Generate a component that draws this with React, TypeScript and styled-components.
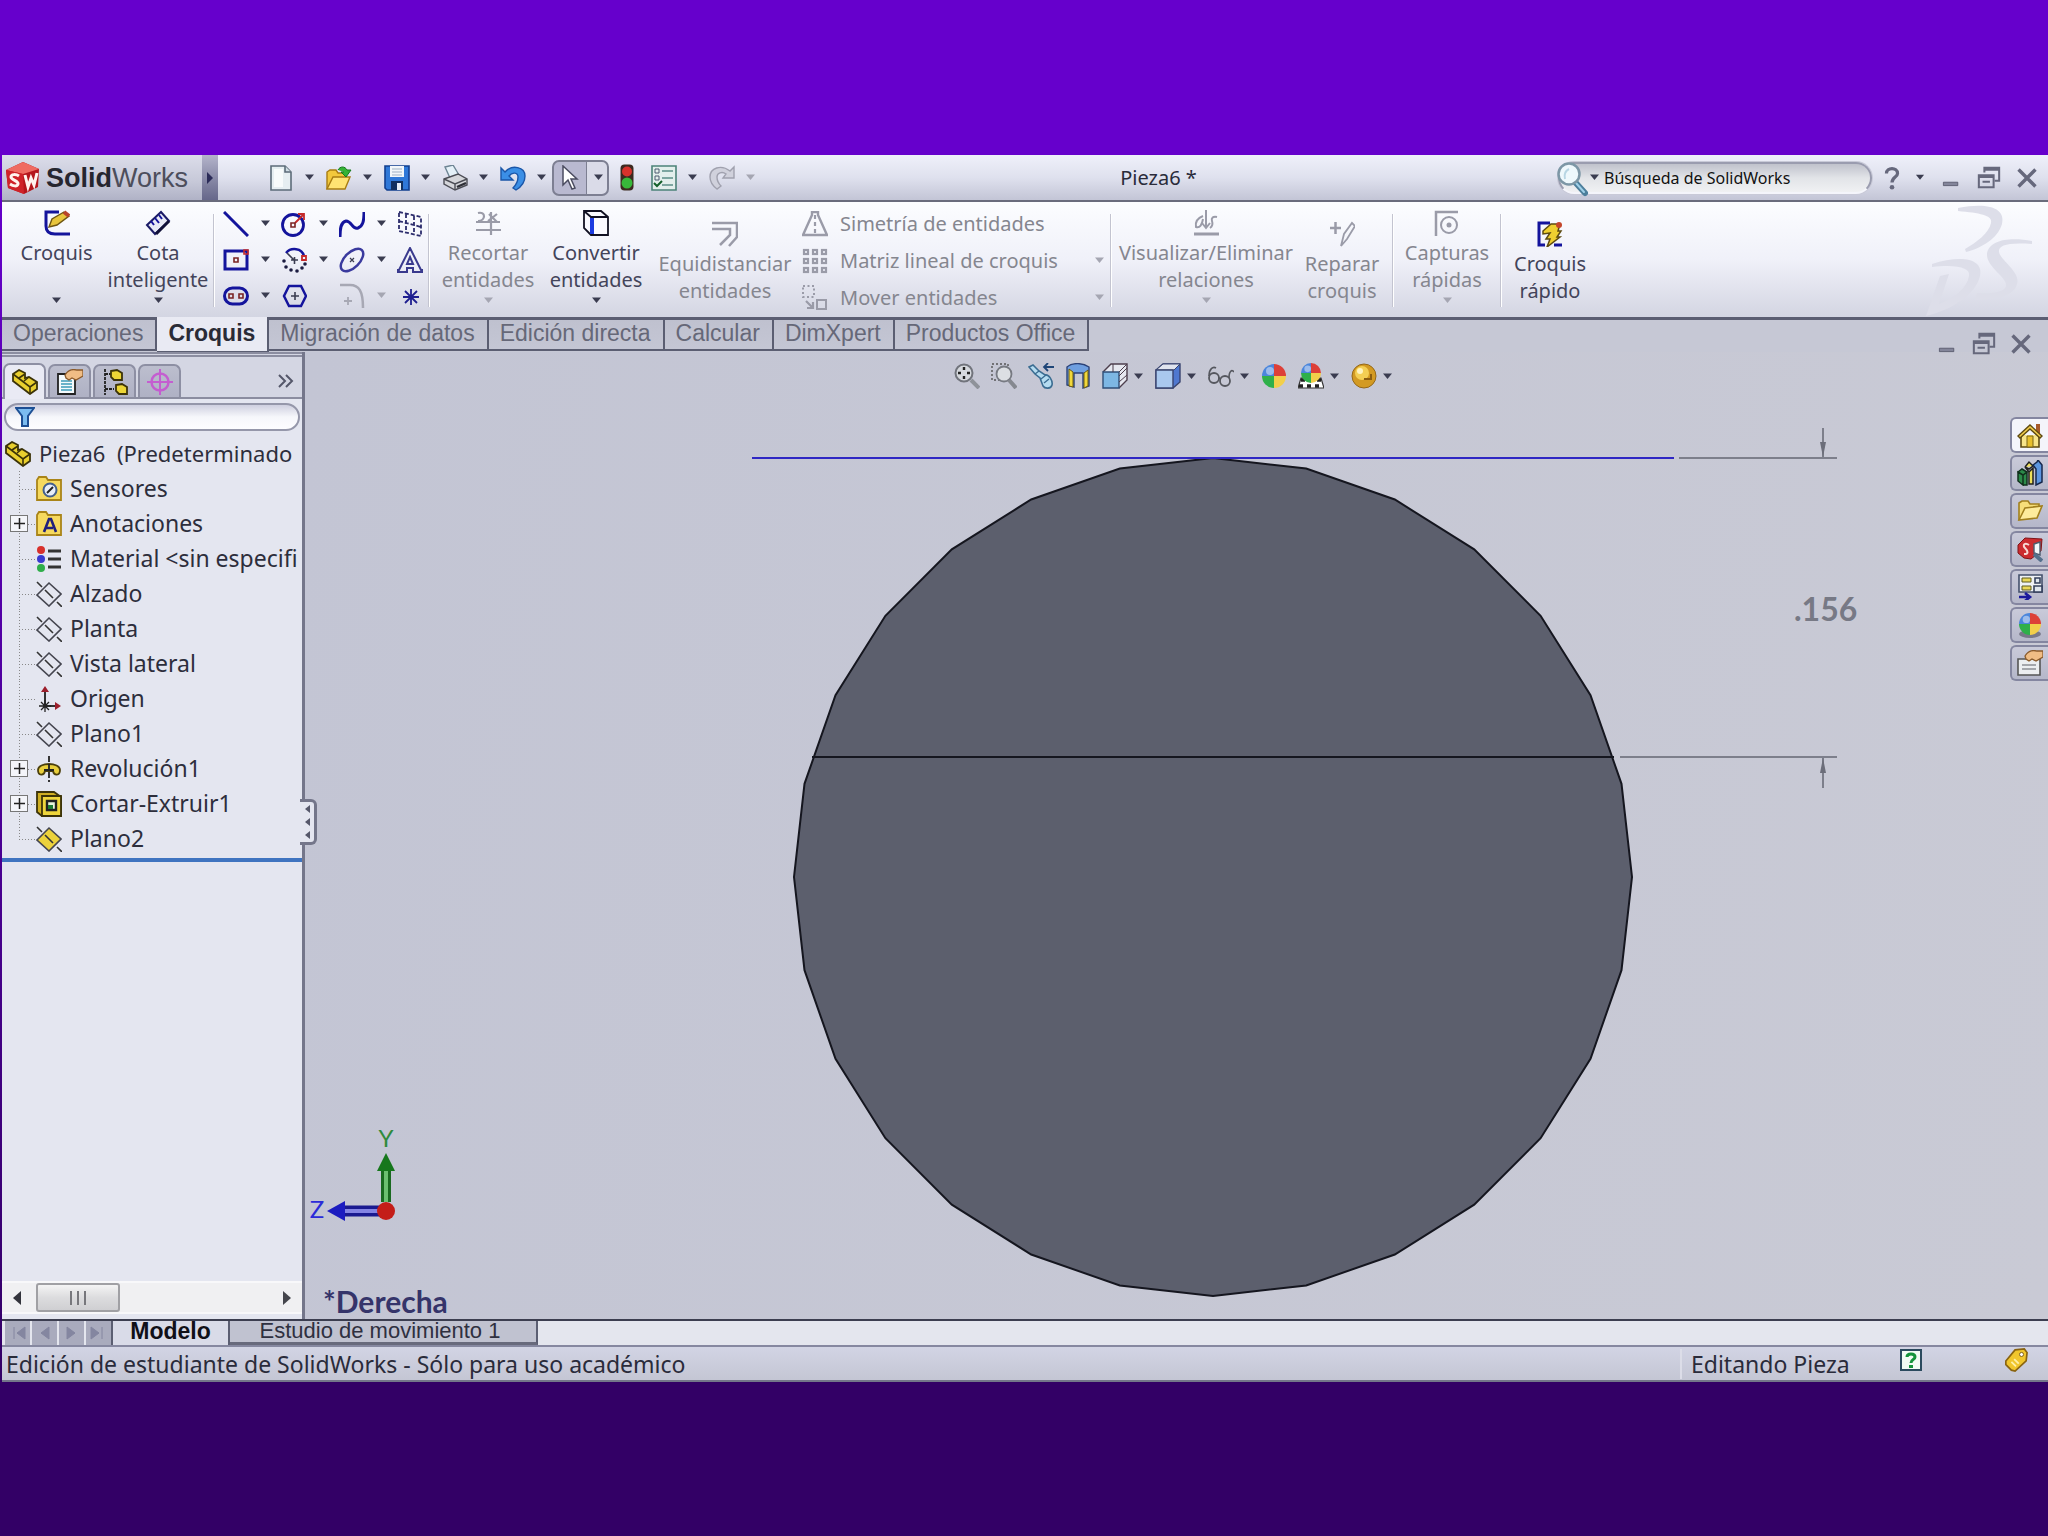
import React from "react";
import styled, { createGlobalStyle, css } from "styled-components";

const ui = `"Noto Sans", "Open Sans", sans-serif`;
const arial = `"Liberation Sans", Arial, sans-serif`;
const edge = "#5b5e72";
const navy = "#14149c";
const ink = "#3a3c50";
const grey = "#9a9ba8";

const GlobalStyle = createGlobalStyle`
  * { box-sizing: border-box; }
  body { margin: 0; font-family: ${ui}; color: #2a2b3a; }
  button, input { font: inherit; color: inherit; }
  button { background: none; border: 0; padding: 0; margin: 0; }
  ul { list-style: none; margin: 0; padding: 0; }
  svg { display: block; flex: none; }
`;

const Desktop = styled.div`
  min-height: 100vh;
  display: flex;
  flex-direction: column;
  padding: 155px 0 154px 2px;
  background: linear-gradient(#6600cc 0%, #6600cc 10%, #330066 90%, #330066 100%);
`;

const Window = styled.main`
  flex: 1;
  display: flex;
  flex-direction: column;
  background: #c6c8d5;
  overflow: hidden;
`;

/* ---------- title bar ---------- */

const TitleBar = styled.header`
  height: 47px;
  display: flex;
  align-items: stretch;
  background: linear-gradient(#eff0fa, #dfe1ee 50%, #c3c5d6);
  border-bottom: 2px solid #6a6c7c;
`;

const Brand = styled.div`
  width: 200px;
  display: flex;
  align-items: center;
  gap: 6px;
  padding-left: 4px;
  background: linear-gradient(#dcddea, #c6c8d8 60%, #b0b2c6);
  font-family: ${arial};
  font-size: 27px;
  line-height: 32px;
  color: #4d4e5c;
`;

const BrandName = styled.span`
  b { color: #26262f; }
`;

const BrandMore = styled.button`
  width: 16px;
  display: grid;
  place-items: center;
  background: linear-gradient(#b4b4cb, #8384a2 60%, #66678a);
`;

const QuickBar = styled.div`
  display: flex;
  align-items: center;
  padding-left: 50px;
`;

const QuickItem = styled.button`
  display: flex;
  align-items: center;
  gap: 10px;
  margin-right: 11px;
`;

const QuickLight = styled(QuickItem)`
  margin-right: 17px;
`;

const SelectTool = styled.button`
  width: 57px;
  height: 36px;
  display: flex;
  align-items: center;
  margin: 0 11px 0 -6px;
  border: 2px solid #7d7f92;
  border-radius: 7px;
  background: linear-gradient(90deg, #b9b9d0 32px, #7d7f92 32px, #7d7f92 33px, #dadbe8 33px);
  padding-left: 2px;
  gap: 11px;
`;

const DocTitle = styled.h1`
  flex: 1;
  align-self: center;
  margin: 0;
  padding-right: 8px;
  text-align: center;
  font-size: 20px;
  font-weight: 400;
  line-height: 28px;
`;

const Search = styled.label`
  align-self: center;
  position: relative;
  width: 314px;
  height: 32px;
  display: flex;
  align-items: center;
  gap: 4px;
  padding-left: 29px;
  border: 2px solid #9a9caf;
  border-bottom-color: #f4f5fb;
  border-radius: 16px;
  background: linear-gradient(#c0c2cc, #e2e4e8 50%, #f0f1f3);
  box-shadow: 0 0 0 1px #c9cad8;
`;

const SearchLens = styled.span`
  position: absolute;
  left: -4px;
  top: -2px;
`;

const SearchInput = styled.input`
  flex: 1;
  min-width: 0;
  border: 0;
  padding: 0;
  background: none;
  outline: none;
  font-size: 16px;
  line-height: 24px;
  color: #111;
`;

const Controls = styled.div<{ $gap: number }>`
  display: flex;
  align-items: center;
  gap: ${(p) => p.$gap}px;
`;

const AppControls = styled(Controls)`
  padding: 0 10px 0 12px;
`;

/* ---------- ribbon ---------- */

const Ribbon = styled.section`
  height: 118px;
  display: flex;
  align-items: stretch;
  padding-left: 4px;
  background: linear-gradient(#fcfdff, #f0f1f9 50%, #d3d5e2);
  border-bottom: 3px solid ${edge};
`;

const Separator = styled.div`
  width: 2px;
  margin: 12px 4px 10px;
  background: linear-gradient(90deg, #c3c4d0 50%, #ffffff 50%);
`;

const BigButton = styled.button<{ $w: number; $low?: boolean; $off?: boolean }>`
  width: ${(p) => p.$w}px;
  display: flex;
  flex-direction: column;
  align-items: center;
  padding-top: ${(p) => (p.$low ? 19 : 8)}px;
  font-size: 20px;
  line-height: 27px;
  color: ${(p) => (p.$off ? "#85868f" : "#43445a")};
  white-space: pre-line;
`;

const BigLabel = styled.span`
  height: 58px;
  margin: 3px -8px 0;
`;

const ToolGrid = styled.div`
  display: grid;
  grid-template-columns: repeat(3, 58px) 27px;
  grid-auto-rows: 36px;
  align-content: center;
  padding-left: 4px;
`;

const SmallTool = styled.button`
  display: flex;
  align-items: center;
  gap: 11px;
`;

const RowList = styled.div`
  width: 306px;
  padding: 3px 1px 0 2px;
  display: grid;
  grid-auto-rows: 37px;
`;

const RowButton = styled.button`
  display: flex;
  align-items: center;
  gap: 12px;
  font-size: 20px;
  line-height: 28px;
  color: #85868f;
  span { flex: 1; text-align: left; }
`;

const Watermark = styled.div`
  margin-left: auto;
  padding-right: 12px;
`;

/* ---------- command tabs ---------- */

const TabStrip = styled.nav`
  display: flex;
  align-items: flex-start;
  height: 32px;
`;

const CommandTab = styled.button<{ $active?: boolean }>`
  height: 31px;
  padding: 0 12px 0 11px;
  border: solid ${edge};
  border-width: 0 2px 2px 0;
  background: linear-gradient(#bfc1cf, #c4c6d4);
  font-family: ${arial};
  font-size: 23px;
  line-height: 24px;
  padding-bottom: 4px;
  color: #666878;
  ${(p) =>
    p.$active &&
    css`
      position: relative;
      height: 36px;
      margin-top: -3px;
      padding-bottom: 3px;
      background: #e9eaf3;
      font-weight: 700;
      color: #2a2b36;
    `}
`;

/* ---------- body ---------- */

const Body = styled.div`
  flex: 1;
  display: flex;
  min-height: 0;
`;

const Panel = styled.aside`
  width: 303px;
  display: flex;
  flex-direction: column;
  background: #e4e6f0;
  border-right: 3px solid #74768a;
  position: relative;
`;

const PanelTabs = styled.div`
  display: flex;
  align-items: flex-end;
  gap: 2px;
  height: 47px;
  padding-left: 1px;
  background: #d4d6e3;
  border-top: 5px double #8b8da0;
  border-bottom: 2px solid #8b8da0;
`;

const PanelTab = styled.button<{ $active?: boolean }>`
  width: 43px;
  height: ${(p) => (p.$active ? 36 : 33)}px;
  margin-bottom: ${(p) => (p.$active ? -2 : 0)}px;
  display: grid;
  place-items: center;
  border: 2px solid #8d8fa3;
  border-bottom: 0;
  border-radius: 7px 7px 0 0;
  background: ${(p) => (p.$active ? "#e9eaf4" : "linear-gradient(#bcbece, #afb1c4)")};
`;

const PanelMore = styled.button`
  margin: 0 8px 8px auto;
`;

const Filter = styled.label`
  display: flex;
  align-items: center;
  height: 28px;
  margin: 4px 2px 5px 2px;
  padding-left: 9px;
  border: 2px solid #9597aa;
  border-radius: 14px;
  background: linear-gradient(#cfd0e0, #f6f7fb 50%, #fdfdff);
`;

const FilterInput = styled.input`
  flex: 1;
  min-width: 0;
  border: 0;
  outline: none;
  background: none;
  font-size: 16px;
`;

const Tree = styled.ul`
  overflow: hidden;
  padding-bottom: 2px;
  border-bottom: 4px solid #3f74c0;
  font-size: 23px;
  line-height: 35px;
  color: #2d2e3c;
`;

const TreeRoot = styled.li`
  display: flex;
  align-items: center;
  gap: 8px;
  height: 35px;
  padding-left: 3px;
  font-size: 22px;
  white-space: pre;
`;

const TreeItem = styled.li<{ $last?: boolean }>`
  display: flex;
  align-items: center;
  gap: 8px;
  height: 35px;
  white-space: nowrap;
  padding-left: 8px;
  background:
    repeating-linear-gradient(#888 0 1px, transparent 1px 3px) 17px 0 / 1px ${(p) => (p.$last ? 18 : 35)}px no-repeat,
    repeating-linear-gradient(90deg, #888 0 1px, transparent 1px 3px) 17px 18px / 17px 1px no-repeat;
`;

const Gutter = styled.span`
  flex: none;
  width: 18px;
  display: flex;
  align-items: center;
`;

const Expander = styled.button`
  width: 18px;
  height: 17px;
  display: grid;
  place-items: center;
  border: 1px solid #777;
  background: #f4f5fa;
`;

const Splitter = styled.button`
  position: absolute;
  z-index: 2;
  left: 298px;
  top: 447px;
  width: 17px;
  height: 46px;
  display: grid;
  place-items: center;
  border: 3px solid #74768a;
  border-left: 0;
  border-radius: 0 6px 6px 0;
  background: #e4e6f0;
`;

const HScroll = styled.div`
  margin: auto 0 5px;
  height: 33px;
  display: flex;
  align-items: center;
  padding: 0 10px;
  gap: 15px;
  background: #f0f0f2;
  border-top: 2px solid #f8f8fa;
  border-bottom: 2px solid #f8f8fa;
`;

const Thumb = styled.button`
  width: 84px;
  height: 29px;
  margin-right: auto;
  display: flex;
  align-items: center;
  justify-content: center;
  gap: 5px;
  border: 2px solid #a0a0a4;
  border-radius: 3px;
  background: linear-gradient(#f4f4f4, #dcdcde 50%, #cfcfd2);
  i { width: 2px; height: 14px; background: #77777c; }
`;

const Canvas = styled.section`
  flex: 1;
  min-width: 0;
  position: relative;
  display: flex;
  background: linear-gradient(100deg, #c3c5d4, #c9cad5);
`;

const Drawing = styled.svg`
  flex: 1;
  width: 100%;
  height: 100%;
  min-width: 0;
`;

const ViewBar = styled.div`
  position: absolute;
  left: 0;
  right: 6px;
  top: 11px;
  display: flex;
  justify-content: center;
  gap: 11px;
`;

const ViewTool = styled.button`
  display: flex;
  align-items: center;
  gap: 5px;
`;

const DocControls = styled(Controls)`
  position: absolute;
  right: 16px;
  top: -20px;
`;

const TaskPane = styled.nav`
  position: absolute;
  right: 0;
  top: 65px;
  display: grid;
  gap: 2px;
`;

const TaskTab = styled.button<{ $active?: boolean }>`
  width: 38px;
  height: 36px;
  display: grid;
  place-items: center;
  border: 2px solid #8486a0;
  border-right: 0;
  border-radius: 6px 0 0 6px;
  background: ${(p) => (p.$active ? "#f4f5fb" : "linear-gradient(#c9cad9, #b5b7c9)")};
`;

/* ---------- bottom ---------- */

const ModelTabs = styled.nav`
  height: 26px;
  display: flex;
  align-items: stretch;
  border-top: 2px solid #3c3e50;
  background: #e4e6ee;
  font-family: ${arial};
  line-height: 20px;
`;

const NavGroup = styled.div`
  display: flex;
  gap: 2px;
  width: 111px;
  padding-left: 3px;
  border-right: 2px solid ${edge};
`;

const NavButton = styled.button`
  width: 25px;
  display: grid;
  place-items: center;
  background: #a9abbd;
`;

const ModelTab = styled.button<{ $active?: boolean; $w: number }>`
  width: ${(p) => p.$w}px;
  padding-right: ${(p) => (p.$active ? 0 : 6)}px;
  padding-bottom: ${(p) => (p.$active ? 4 : 1)}px;
  border-right: 2px solid ${edge};
  border-bottom: ${(p) => (p.$active ? 0 : 3)}px solid #686a7c;
  background: ${(p) => (p.$active ? "#d9dbe8" : "#c0c2d0")};
  font-size: ${(p) => (p.$active ? 23 : 22)}px;
  font-weight: ${(p) => (p.$active ? 700 : 400)};
  color: ${(p) => (p.$active ? "#101018" : "#2f3040")};
`;

const StatusBar = styled.footer`
  height: 37px;
  display: flex;
  align-items: center;
  padding: 0 20px 0 4px;
  border-top: 2px solid #8688a0;
  border-bottom: 2px solid #74768a;
  background: linear-gradient(#d2d4e4, #c4c6d4);
  font-size: 23px;
  line-height: 30px;
`;

const StatusMode = styled.span`
  margin-left: auto;
  width: 212px;
  padding-left: 9px;
  border-left: 2px solid #dcdde8;
`;

const StatusHelp = styled.button`
  margin: 0 82px 8px 8px;
`;

const StatusTag = styled.button`
  margin-bottom: 8px;
`;

/* ---------- drawings ---------- */

const Icon = ({ children, size = 26 }: { children: React.ReactNode; size?: number }) => (
  <svg width={size} height={size} viewBox="0 0 26 26" fill="none" aria-hidden="true">
    {children}
  </svg>
);

const Caret = ({ off = false, w = 11 }: { off?: boolean; w?: number }) => (
  <svg width={w} height="7" viewBox="0 0 11 7" aria-hidden="true">
    <path d="M1 0.5h9L5.500 6z" fill={off ? "#a5a6b2" : ink} />
  </svg>
);

const Logo = () => (
  <svg width="34" height="32" viewBox="0 0 34 32" aria-hidden="true">
    <path d="M17 0 33 7 32 25 18 32 2 26 0 8z" fill="#b5161c" />
    <path d="M17 0 33 7 17 12 0 8z" fill="#ef6b62" />
    <path d="M0 8 17 12 18 32 2 26z" fill="#cf2228" />
    <path d="M13 14c-3-2-8-2-8 1s8 4 7 7-5 2-8 0" fill="none" stroke="#fff3ee" strokeWidth="3" />
    <path d="M19 13l3 12 3-9 3 7 3-12" fill="none" stroke="#fff3ee" strokeWidth="3" />
  </svg>
);

const NewIcon = () => (
  <Icon>
    <path d="M3 1h14l6 6v18H3z" fill="#e6eef1" stroke="#5c6b78" strokeWidth="1.6" />
    <path d="M6 4h9v18H6z" fill="#f8fbfb" />
    <path d="M17 1v6h6" fill="#cfdde4" stroke="#5c6b78" strokeWidth="1.6" />
  </Icon>
);
const OpenIcon = () => (
  <Icon>
    <path d="M1 24V7l3-2h6l2 3h8v5" fill="#f2c83c" stroke="#a87c12" strokeWidth="1.4" />
    <path d="M1 24 7 12h17l-5 12z" fill="#ffe372" stroke="#a87c12" strokeWidth="1.4" />
    <path d="M12 5c2-4 7-4 9 0h4l-5 7-5-5h3" fill="#35b336" stroke="#167a1b" />
  </Icon>
);
const SaveIcon = () => (
  <Icon>
    <path d="M1 1h24v24H3l-2-2z" fill="#2f78d8" stroke="#123f8f" strokeWidth="1.6" />
    <path d="M6 1h14v11H6z" fill="#f2f6fa" />
    <path d="M8 4h10M8 7h10M8 10h10" stroke="#9fb0c4" />
    <path d="M7 16h12v9H7z" fill="#12305f" />
    <path d="M13 18h4v7h-4z" fill="#e8eef6" />
  </Icon>
);
const PrintIcon = () => (
  <Icon>
    <path d="M3 2 11 0l6 10-9 3z" fill="#e5f1f8" stroke="#6d8493" strokeWidth="1.4" />
    <path d="M2 14 16 9l9 5v6l-12 5-11-6z" fill="#d5d6da" stroke="#4c4d55" strokeWidth="1.4" />
    <path d="M2 14l11 5 12-5M13 19v6" stroke="#4c4d55" strokeWidth="1.4" />
    <path d="M15 22l9-4" stroke="#2e2f36" strokeWidth="2.400" />
  </Icon>
);
const UndoIcon = () => (
  <Icon>
    <path d="M1 3v12h12l-4-4c3-4 9-4 9 1 0 4-2 8-5 11l3 2c5-3 9-8 9-14C25 2 12-1 5 7z" fill="#3b8fe6" stroke="#1a56a8" strokeWidth="1.4" />
  </Icon>
);
const CursorIcon = () => (
  <Icon>
    <path d="M7 1v19l5-5 4 9 3-1-4-9h6z" fill="#fff" stroke="#4b4c60" strokeWidth="1.5" />
  </Icon>
);
const LightIcon = () => (
  <svg width="14" height="27" viewBox="0 0 14 27" aria-hidden="true">
    <rect x="0.500" y="0.500" width="13" height="26" rx="4" fill="#3c2a20" />
    <circle cx="7" cy="7.500" r="5" fill="#d8322c" />
    <circle cx="7" cy="19" r="5.500" fill="#38b83a" />
  </svg>
);
const OptionsIcon = () => (
  <Icon>
    <path d="M1 1h24v24H1z" fill="#e3efec" stroke="#4c8278" strokeWidth="1.6" />
    <path d="M4 4h4v4H4zM4 11h4v4H4z" stroke="#4c5a70" />
    <path d="M11 6h11M11 13h11M11 20h11" stroke="#5c8f86" strokeWidth="1.6" />
    <path d="M3 18l3 3 5-5" stroke="#14602a" strokeWidth="2" />
  </Icon>
);
const RedoIcon = () => (
  <Icon>
    <path d="M25 2v11H14l3-4c-4-3-9-1-9 3s2 7 4 9l-4 3C4 21 1 17 1 12 1 3 12-1 21 6z" fill="#d0d1dc" stroke="#a0a1ae" strokeWidth="1.4" />
  </Icon>
);
const LensIcon = () => (
  <svg width="34" height="36" viewBox="0 0 34 36" aria-hidden="true">
    <path d="M19 20l10 11" stroke="#4d7f9c" strokeWidth="6" strokeLinecap="round" />
    <path d="M20 21l8 9" stroke="#9fd0e8" strokeWidth="2" strokeLinecap="round" />
    <circle cx="13" cy="12" r="10.500" fill="#eef8fc" stroke="#7d97a6" strokeWidth="2.500" />
    <path d="M9 17c-1-4 0-8 4-10" stroke="#b8d6e4" strokeWidth="2" fill="none" />
  </svg>
);

const CroquisIcon = () => (
  <Icon>
    <path d="M15 2H2v14c0 6 4 8 9 8h15" stroke={navy} strokeWidth="3" />
    <path d="M5 17 8 9 20 2l5 4-12 9z" fill="#e8c53c" stroke="#6e5612" strokeWidth="1.400" />
    <path d="M20 2l5 4" stroke="#b8442a" strokeWidth="4" />
  </Icon>
);
const CotaIcon = () => (
  <Icon>
    <path d="M2 15 16 2l8 9-14 13z" fill="#e8eaf6" stroke="#1b1b66" strokeWidth="2" />
    <path d="M11 24 24 11" stroke="#111138" strokeWidth="3" />
    <path d="M6 11l3 4M10 8l4 5M14 5l3 4" stroke={navy} strokeWidth="2" />
  </Icon>
);
const LineIcon = () => <Icon><path d="M1 1l24 24" stroke={navy} strokeWidth="3" /></Icon>;
const CircleIcon = () => (
  <Icon>
    <circle cx="12" cy="14" r="10.500" stroke={navy} strokeWidth="2.800" />
    <path d="M14 12l9-9M17 3h6v6" stroke="#c52a2a" strokeWidth="1.800" />
    <path d="M10 12h4v4h-4z" stroke="#7a2323" strokeWidth="1.600" />
  </Icon>
);
const SplineIcon = () => <Icon><path d="M1 26c0-9 1-15 6-16 6 0 6 9 12 7 5-2 6-7 6-16" stroke={navy} strokeWidth="3" /></Icon>;
const DashPlaneIcon = () => (
  <Icon><path d="M2 1l22 5v19L2 20zM2 10l22 6M9 3v19M17 5v18" stroke="#2c2c6c" strokeWidth="1.800" strokeDasharray="4 2" /></Icon>
);
const RectIcon = () => (
  <Icon>
    <path d="M2 4h22v18H2z" stroke={navy} strokeWidth="3" />
    <path d="M11 11h4v4h-4z" stroke="#7a2323" strokeWidth="1.600" />
    <path d="M21 3h4v4h-4z" stroke="#c52a2a" strokeWidth="1.600" />
  </Icon>
);
const ArcIcon = () => (
  <Icon>
    <path d="M5 6c5-6 16-5 18 3" stroke={navy} strokeWidth="2.500" />
    <path d="M21 9h4v4h-4z" stroke="#c52a2a" strokeWidth="1.800" />
    <path d="M6 6l7 7M10 13h7M13.500 10v7" stroke={ink} strokeWidth="1.600" />
    <g fill="#1c1c40">
      <circle cx="3" cy="14" r="1.800" /><circle cx="5" cy="20" r="1.800" /><circle cx="10" cy="23" r="1.800" />
      <circle cx="16" cy="24" r="1.800" /><circle cx="21" cy="21" r="1.800" /><circle cx="24" cy="17" r="1.800" />
    </g>
  </Icon>
);
const EllipseIcon = () => (
  <Icon>
    <ellipse cx="13" cy="13" rx="14" ry="7.500" transform="rotate(-45 13 13)" stroke="#3a3a9e" strokeWidth="2.500" />
    <path d="M11 11l4 4M15 11l-4 4" stroke={ink} strokeWidth="1.200" />
  </Icon>
);
const TextIcon = () => (
  <Icon><path d="M13 1 2 23H1v2h9v-4h6v4h9v-2h-1zM13 10l3 7h-6z" stroke="#3a3a8e" strokeWidth="2" /></Icon>
);
const SlotIcon = () => (
  <Icon>
    <rect x="1.500" y="5" width="23" height="16" rx="8" stroke={navy} strokeWidth="3" />
    <path d="M6 11h4v4H6zM16 11h4v4h-4z" stroke="#7a2323" strokeWidth="1.600" />
  </Icon>
);
const HexIcon = () => (
  <Icon>
    <path d="M8 3h12l5 10-5 10H8L3 13z" stroke={navy} strokeWidth="2.500" />
    <path d="M10 13h8M14 9v8" stroke={ink} strokeWidth="1.600" />
  </Icon>
);
const FilletIcon = () => (
  <Icon><path d="M1 2h10c9 0 13 6 13 23" stroke="#a7a8b4" strokeWidth="2.500" /><path d="M5 18h8M9 14v8" stroke="#a7a8b4" strokeWidth="1.800" /></Icon>
);
const StarIcon = () => <Icon><path d="M14 6v16M6 14h16M8 8l12 12M20 8 8 20" stroke="#1f1f90" strokeWidth="1.800" /></Icon>;
const TrimIcon = () => (
  <Icon><path d="M1 20h25M16 2v23M1 12h24M3 3c8-2 8 8 0 8M22 4l-9 7M14 4l8 8" stroke={grey} strokeWidth="2.200" /></Icon>
);
const ConvertIcon = () => (
  <Icon>
    <path d="M1 1h17l7 6v18H8L1 18zM1 1l7 6h17M8 7v18" fill="#fafaff" stroke="#111122" strokeWidth="1.800" />
    <path d="M9 8v16" stroke="#1c3be0" strokeWidth="4" />
  </Icon>
);
const OffsetIcon = () => <Icon><path d="M0 2h25v14l-8 9M0 8h18v6l-10 10" stroke={grey} strokeWidth="2.500" /></Icon>;
const MirrorIcon = () => <Icon><path d="M1 24 10 4v-3h6v3l9 20z" stroke={grey} strokeWidth="2.400" /><path d="M13 4v20" stroke={grey} strokeWidth="2.200" strokeDasharray="4 3" /></Icon>;
const PatternIcon = () => (
  <Icon>
    {[2, 11, 20].map((y) => [2, 11, 20].map((x) => <rect key={`${x}-${y}`} x={x} y={y} width="4" height="4" stroke={grey} strokeWidth="2.200" />))}
  </Icon>
);
const MoveIcon = () => (
  <Icon>
    <path d="M1 1h11v11H1z" stroke={grey} strokeWidth="2" strokeDasharray="2 2.500" />
    <path d="M15 15h9v9h-9z" stroke={grey} strokeWidth="2" />
    <path d="M4 16l7 7M11 17v6H5" stroke={grey} strokeWidth="2.200" />
  </Icon>
);
const RelationsIcon = () => (
  <Icon><path d="M1 24h25" stroke={grey} strokeWidth="3" /><path d="M13 0v18M9 13l4 5 4-5M10 6C5 8 2 12 3 17c4 1 6-2 7-8M24 7c-4-1-6 1-5 4s1 5-2 7" stroke={grey} strokeWidth="2" /></Icon>
);
const RepairIcon = () => <Icon><path d="M1 7h11M6.500 1v12" stroke={grey} strokeWidth="2.500" /><path d="M12 25l3-12 8-11 3 3-8 13z" stroke={grey} strokeWidth="1.800" /></Icon>;
const SnapsIcon = () => (
  <Icon><path d="M2 26V2h22" stroke={grey} strokeWidth="2.500" /><circle cx="15" cy="15" r="8" stroke={grey} strokeWidth="2" /><circle cx="15" cy="15" r="2.500" fill={grey} /></Icon>
);
const RapidIcon = () => (
  <Icon>
    <path d="M13 2H2v22h6M17 24h8" stroke={navy} strokeWidth="3" />
    <path d="M6 10l8-7h9l-2 7h3l-4 6h3L10 26l3-8h-4l4-6-7 1z" fill="#efd030" stroke="#5c4a10" strokeWidth="1.500" />
    <circle cx="22" cy="4" r="3" fill="#c4462a" />
  </Icon>
);

const MinIcon = () => <Icon size={22}><path d="M4 18h17v4H4z" fill="#83859a" stroke="#55576a" /></Icon>;
const RestoreIcon = () => (
  <Icon size={24}><path d="M8 7V2h16v14h-5M8 4h16" stroke="#66687c" strokeWidth="2.200" /><path d="M2 10h16v13H2zM2 12h16M6 17h8" stroke="#66687c" strokeWidth="2.200" /></Icon>
);
const CloseIcon = () => <Icon size={22}><path d="M3 3l20 20M23 3 3 23" stroke="#66687c" strokeWidth="4" /></Icon>;
const HelpIcon = () => (
  <svg width="16" height="24" viewBox="0 0 16 26" aria-hidden="true">
    <path d="M2 8c0-7 12-7 12 0 0 4-6 4-6 10" fill="none" stroke="#66687c" strokeWidth="3.500" />
    <circle cx="8" cy="23" r="2.500" fill="#66687c" />
  </svg>
);

const PartIcon = () => (
  <Icon>
    <path d="M1 5 7 1l6 3v5l4-1 8 5v7l-7 5L1 12z" fill="#e9cf2e" stroke="#3c3308" strokeWidth="1.800" />
    <path d="M1 5l17 13 7-5M18 18v7M7 9l6-4M12 12l5-4" stroke="#3c3308" strokeWidth="1.600" />
  </Icon>
);
const Hand = () => <path d="M8 6c3-5 8-6 12-5h6v6l-7 4-4-2-3 2-3-2z" fill="#f0bd85" stroke="#8a5a2a" strokeWidth="1.300" />;
const PropertyIcon = () => (
  <Icon><path d="M1 5h17v20H1z" fill="#f4fafc" stroke="#222" strokeWidth="1.800" /><path d="M4 12h11M4 15h11M4 18h11M4 21h11" stroke="#3e9cb8" strokeWidth="1.400" /><Hand /></Icon>
);
const ConfigIcon = () => (
  <Icon>
    <path d="M3 0v26M3 5h7M3 20h9" stroke="#222" strokeWidth="1.800" strokeDasharray="3 1" />
    <path d="M9 2l6-1 5 3v7h-8l-3-3zM14 16l6-1 5 3v7h-8l-3-3z" fill="#ecd536" stroke="#3c3308" strokeWidth="1.800" />
  </Icon>
);
const TargetIcon = () => (
  <Icon><circle cx="13" cy="13" r="8.500" stroke="#c45ed0" strokeWidth="2.500" /><path d="M13 0v26M0 13h26" stroke="#c45ed0" strokeWidth="2" /></Icon>
);
const FunnelIcon = () => (
  <svg width="20" height="20" viewBox="0 0 20 20" aria-hidden="true"><path d="M1 1h18l-6 8v10H7V9z" fill="#7bbcf0" stroke="#1d4f94" strokeWidth="2" /></svg>
);
const Folder = () => <path d="M1 24V4l2-3h7l2 3h13v20z" fill="#f6d95e" stroke="#a98418" strokeWidth="1.800" />;
const SensorIcon = () => <Icon><Folder /><circle cx="14" cy="14" r="6.500" fill="#e8eefa" stroke="#45608c" strokeWidth="2" /><path d="M11 17l6-6" stroke="#222" strokeWidth="2" /></Icon>;
const NoteIcon = () => <Icon><Folder /><path d="M8 21l5-13h2l5 13M10 17h7" stroke="#20207c" strokeWidth="2.600" /></Icon>;
const MaterialIcon = () => (
  <Icon>
    <circle cx="5" cy="4" r="4" fill="#d8312c" /><circle cx="5" cy="13" r="4" fill="#3a3ad0" /><circle cx="5" cy="22" r="4" fill="#2fae4a" />
    <path d="M12 5h13M12 13h13M12 21h13" stroke="#333" strokeWidth="2.800" />
  </Icon>
);
const PlaneIcon = ({ fill = "none" }: { fill?: string }) => (
  <Icon>
    <path d="M1 14 13 2l12 11-12 12z" fill={fill} stroke="#44454f" strokeWidth="1.600" />
    <path d="M1 1l5 5M9 9l8 8M21 21l5 5" stroke="#333" strokeWidth="1.600" />
  </Icon>
);
const OriginIcon = () => (
  <Icon><path d="M9 5v15h12" stroke="#333" strokeWidth="2" /><path d="M5 16l8 8M13 16l-8 8M9 14v12M3 20h12" stroke="#222" strokeWidth="1.300" /><path d="M9 0l4 6H5zM25 20l-6-4v8z" fill="#9c1f2c" /></Icon>
);
const RevolveIcon = () => (
  <Icon><path d="M2 14c0-8 22-8 22 0 0 6-6 6-7 1h-8c-1 5-7 5-7-1z" fill="#e9cf3c" stroke="#4c400c" strokeWidth="1.800" /><path d="M13 0v26" stroke="#222" strokeWidth="1.800" strokeDasharray="6 2" /><path d="M8 14h10" stroke="#222" strokeWidth="2" /></Icon>
);
const CutIcon = () => (
  <Icon>
    <path d="M1 1h17l7 5v19H6l-5-4z" fill="#cfae22" stroke="#3c3308" strokeWidth="1.800" />
    <path d="M6 5h19v20H6z" fill="#efd63c" stroke="#3c3308" strokeWidth="1.800" />
    <path d="M11 10h9v9h-9z" fill="#e8f4dc" stroke="#222" strokeWidth="2.400" /><path d="M12 18v-4h5v4z" fill="#1d7a34" />
  </Icon>
);

const ZoomFitIcon = () => (
  <Icon><circle cx="10" cy="10" r="8.500" fill="#d6d9de" stroke="#71747c" strokeWidth="2" /><path d="M10 4v3M10 13v3M4 10h3M13 10h3" stroke="#222" strokeWidth="2.400" /><path d="M17 17l8 8" stroke="#8e9299" strokeWidth="4" /></Icon>
);
const ZoomAreaIcon = () => (
  <Icon><path d="M1 1h16v16H1z" stroke="#555" strokeWidth="1.400" strokeDasharray="2 2" /><circle cx="13" cy="11" r="7.500" fill="#dcdfe3" stroke="#777a82" strokeWidth="1.800" /><path d="M18 17l7 8" stroke="#85888f" strokeWidth="4" /></Icon>
);
const PrevViewIcon = () => (
  <Icon>
    <path d="M1 4l4-2 6 6 6 4c4-1 8 6 7 10-1 4-7 4-9 1l-3-8-5-4z" fill="#b5dcf0" stroke="#3b6d92" strokeWidth="1.600" />
    <path d="M7 11l4-3M13 16l5-4M16 20l5-4" stroke="#3b6d92" strokeWidth="1.400" />
    <path d="M26 4h-9M20 0l-4 4 4 4" stroke="#1f4678" strokeWidth="1.800" />
  </Icon>
);
const SectionIcon = () => (
  <Icon><path d="M2 4c6-5 16-4 22 0v19l-6 2V10h-9v14l-7-2z" fill="#6f9fe0" stroke="#2c4278" strokeWidth="1.400" /><path d="M4 6v17l4 1V9zM19 10v15l4-2V7z" fill="#f1d83c" stroke="#6c5a10" /></Icon>
);
const OrientIcon = () => (
  <Icon><path d="M1 9 9 1h16v16l-8 8" fill="#e6e8f0" stroke="#4d3f4d" strokeWidth="1.400" /><path d="M1 9h16v16H1z" fill="#7db7e4" stroke="#2f4f78" strokeWidth="1.400" /><path d="M17 9l8-8M11 1v8M17 13l8-8M17 19l8-7" stroke="#4d3f4d" /></Icon>
);
const CubeIcon = () => (
  <Icon><path d="M1 7 8 1h17v18l-7 6H1z" fill="#4f78d0" stroke="#3a4570" strokeWidth="1.400" /><path d="M1 7 8 1h17l-6 6z" fill="#e0e4ee" stroke="#3a4570" /><path d="M1 7h17v18H1z" fill="#a9c8ee" stroke="#3a4570" strokeWidth="1.400" /></Icon>
);
const GlassesIcon = () => (
  <Icon><circle cx="6" cy="15" r="5" stroke="#55575e" strokeWidth="1.800" /><circle cx="17" cy="18" r="5" stroke="#55575e" strokeWidth="1.800" /><path d="M1 13C1 6 5 3 8 5M11 15l2 1M21 15c0-7 3-9 5-6" stroke="#55575e" strokeWidth="1.600" /></Icon>
);
const Ball = ({ r = 12, y = 13 }: { r?: number; y?: number }) => (
  <g transform={`translate(13 ${y}) scale(${r / 12})`}>
    <path d="M0 0V-12A12 12 0 0 0-12 0z" fill="#4b86dc" />
    <path d="M0 0h12A12 12 0 0 0 0-12z" fill="#dd4038" />
    <path d="M0 0v12A12 12 0 0 0 12 0z" fill="#f2cf4a" />
    <path d="M0 0h-12A12 12 0 0 0 0 12z" fill="#2fb04a" />
    <circle cx="-4" cy="-5" r="4" fill="#ffffff" opacity="0.450" />
  </g>
);
const AppearanceIcon = () => <Icon><Ball /></Icon>;
const SceneIcon = () => <Icon><path d="M3 15h20l3 10H0z" fill="#fff" stroke="#333" strokeWidth="1.200" /><path d="M3 17h20M1 23h24" stroke="#222" strokeWidth="3.500" strokeDasharray="4 4" /><Ball r={10} y={10} /></Icon>;
const GoldIcon = () => <Icon><circle cx="13" cy="13" r="12" fill="#d39a22" stroke="#94681a" /><circle cx="11" cy="10" r="7" fill="#f4cf54" /><circle cx="9" cy="8" r="3" fill="#fff4c0" /><path d="M13 16h7v-5" stroke="#8b5d10" strokeWidth="2" /></Icon>;

const HomeIcon = () => (
  <Icon><path d="M4 13v12h18V13" fill="#f8e58a" stroke="#5e4a10" strokeWidth="1.600" /><path d="M19 2h4v9h-4z" fill="#a65a2a" /><path d="M1 14 13 3l12 11-2 2L13 7 3 16z" fill="#f2cd4a" stroke="#5e4a10" strokeWidth="1.400" /><path d="M10 14h6v11h-6z" fill="#e8c02c" stroke="#7a6414" /></Icon>
);
const BooksIcon = () => (
  <Icon>
    <path d="M1 12l5 3v10l-5-4zM6 15l4-3v13H6zM1 12l4-3 5 3-4 3z" fill="#2c8a4a" stroke="#10301c" strokeWidth="1.500" />
    <path d="M8 7l4-5 4 4M12 12l4-4v16h-4z" fill="#efe05a" stroke="#222" strokeWidth="1.500" />
    <path d="M12 12 8 7l4 2 4-3" stroke="#222" strokeWidth="1.500" />
    <path d="M16 5l4-3 1-2 4 5v17l-6 3V9z" fill="#5c96e0" stroke="#16284c" strokeWidth="1.500" />
  </Icon>
);
const FolderOpenIcon = () => <Icon><path d="M2 22V5l3-2h6l2 3h9v4" fill="#f6de7a" stroke="#a2801e" strokeWidth="1.600" /><path d="M2 22 8 10l17-2-5 12z" fill="#fdeb9c" stroke="#a2801e" strokeWidth="1.600" /></Icon>;
const SwSearchIcon = () => (
  <Icon>
    <path d="M1 9 8 2l17 1-1 12-10 8-7-1-6-5z" fill="#cc2c30" stroke="#7e1418" />
    <path d="M12 9C8 6 5 9 8 12s4 6-1 6" stroke="#f7d8d4" strokeWidth="2" />
    <path d="M17 8l6-2v13l-6-2z" fill="#f2f6fa" stroke="#4c5a6c" strokeWidth="1.400" />
    <path d="M17 18l8 7" stroke="#54708c" strokeWidth="4" />
  </Icon>
);
const PaletteIcon = () => (
  <Icon><path d="M2 1h23v17H2z" fill="#eef1f4" stroke="#44506c" strokeWidth="1.600" /><path d="M5 4h9v4H5zM5 12h9v4H5z" fill="#ead858" stroke="#5c5a20" /><path d="M18 4h5v5h-5zM17 12h8v6h-8z" fill="#dfe6ee" stroke="#34405c" strokeWidth="1.600" /><path d="M2 23h9M8 19l5 4-5 4" stroke="#1a1a9c" strokeWidth="2.600" /></Icon>
);
const ShadowBallIcon = () => <Icon><ellipse cx="13" cy="22" rx="11" ry="4" fill="#4c4d5c" opacity="0.600" /><Ball r={11} y={12} /></Icon>;
const CardIcon = () => <Icon><path d="M1 9h22v16H1z" fill="#eceef0" stroke="#555" strokeWidth="1.600" /><path d="M5 15h14M5 19h14" stroke="#8c8e94" strokeWidth="1.400" /><Hand /></Icon>;
const TagIcon = () => (
  <Icon size={24}>
    <path d="M2 14 12 2l10-1 3 4-1 9-12 11-4-1-6-6z" fill="#f1c62c" stroke="#8a6410" strokeWidth="1.800" />
    <circle cx="19" cy="7" r="2.200" fill="#fff" stroke="#7c5a10" />
    <path d="M8 15l5 5M11 12l5 5" stroke="#fff0a8" strokeWidth="2" />
  </Icon>
);

const SIDES = 28;
const CX = 908;
const CY = 523;
const R = 419;
const polygon = Array.from({ length: SIDES }, (_, i) => {
  const a = (i * 2 * Math.PI) / SIDES;
  return `${(CX + R * Math.sin(a)).toFixed(1)},${(CY - R * Math.cos(a)).toFixed(1)}`;
}).join(" ");

const Model = () => (
  <Drawing viewBox="0 -2 1743 967" preserveAspectRatio="xMidYMin meet" role="img" aria-label="Vista derecha de Pieza6">
    <polygon points={polygon} fill="#5c5f6d" stroke="#15161f" strokeWidth="2" />
    <path d="M507 403H1309" stroke="#15161f" strokeWidth="2" />
    <path d="M447 104H1369" stroke="#2f27c4" strokeWidth="2" />
    <path d="M1374 104H1532M1315 403H1532M1518 74V103M1518 404V434" stroke="#7d7f8b" strokeWidth="2" />
    <path d="M1515 88h6l-3 15zM1515 419h6l-3-15z" fill="#6c6e7a" />
    <text x="1489" y="267" fontFamily="Lato, sans-serif" fontSize="32" fontWeight="700" fill="#777985">.156</text>
    <g>
      <path d="M81 815V848" stroke="#1a6a20" strokeWidth="10" />
      <path d="M81 815V848" stroke="#6cc070" strokeWidth="4" />
      <path d="M81 799l9 18H72z" fill="#16771c" />
      <path d="M38 857H76" stroke="#1a1a90" strokeWidth="11" />
      <path d="M38 857H76" stroke="#8484e4" strokeWidth="4" />
      <path d="M22 857l18-10v20z" fill="#1c1cc0" />
      <circle cx="81" cy="857" r="9" fill="#c41d18" />
      <text x="81" y="793" textAnchor="middle" fontFamily="Lato, sans-serif" fontSize="24" fill="#2f8a3c">Y</text>
      <text x="12" y="864" textAnchor="middle" fontFamily="Lato, sans-serif" fontSize="24" fill="#2b2bd8">Z</text>
    </g>
    <text x="18" y="959" fontFamily="Lato, sans-serif" fontSize="30" fontWeight="700" fill="#35346a">*Derecha</text>
  </Drawing>
);

/* ---------- data ---------- */

const quickTools = [
  { name: "Nuevo", icon: <NewIcon /> },
  { name: "Abrir", icon: <OpenIcon /> },
  { name: "Guardar", icon: <SaveIcon /> },
  { name: "Imprimir", icon: <PrintIcon /> },
  { name: "Deshacer", icon: <UndoIcon /> },
];

const sketchTools = [
  { name: "Línea", icon: <LineIcon />, menu: true },
  { name: "Círculo", icon: <CircleIcon />, menu: true },
  { name: "Spline", icon: <SplineIcon />, menu: true },
  { name: "Plano", icon: <DashPlaneIcon /> },
  { name: "Rectángulo", icon: <RectIcon />, menu: true },
  { name: "Arco", icon: <ArcIcon />, menu: true },
  { name: "Elipse", icon: <EllipseIcon />, menu: true },
  { name: "Texto", icon: <TextIcon /> },
  { name: "Ranura", icon: <SlotIcon />, menu: true },
  { name: "Polígono", icon: <HexIcon /> },
  { name: "Redondeo", icon: <FilletIcon />, menu: true, off: true },
  { name: "Punto", icon: <StarIcon /> },
];

const rowTools = [
  { name: "Simetría de entidades", icon: <MirrorIcon /> },
  { name: "Matriz lineal de croquis", icon: <PatternIcon />, menu: true },
  { name: "Mover entidades", icon: <MoveIcon />, menu: true },
];

const commandTabs = ["Operaciones", "Croquis", "Migración de datos", "Edición directa", "Calcular", "DimXpert", "Productos Office"];

const treeItems = [
  { name: "Sensores", icon: <SensorIcon /> },
  { name: "Anotaciones", icon: <NoteIcon />, open: true },
  { name: "Material <sin especifi", icon: <MaterialIcon /> },
  { name: "Alzado", icon: <PlaneIcon /> },
  { name: "Planta", icon: <PlaneIcon /> },
  { name: "Vista lateral", icon: <PlaneIcon /> },
  { name: "Origen", icon: <OriginIcon /> },
  { name: "Plano1", icon: <PlaneIcon /> },
  { name: "Revolución1", icon: <RevolveIcon />, open: true },
  { name: "Cortar-Extruir1", icon: <CutIcon />, open: true },
  { name: "Plano2", icon: <PlaneIcon fill="#ecd23c" /> },
];

const viewTools = [
  { name: "Zoom para ajustar", icon: <ZoomFitIcon /> },
  { name: "Zoom encuadre", icon: <ZoomAreaIcon /> },
  { name: "Vista previa", icon: <PrevViewIcon /> },
  { name: "Vista de sección", icon: <SectionIcon /> },
  { name: "Orientación", icon: <OrientIcon />, menu: true },
  { name: "Estilo de visualización", icon: <CubeIcon />, menu: true },
  { name: "Ocultar", icon: <GlassesIcon />, menu: true },
  { name: "Apariencia", icon: <AppearanceIcon /> },
  { name: "Escena", icon: <SceneIcon />, menu: true },
  { name: "Configuración", icon: <GoldIcon />, menu: true },
];

const taskTabs = [
  { name: "Recursos", icon: <HomeIcon /> },
  { name: "Biblioteca", icon: <BooksIcon /> },
  { name: "Explorador", icon: <FolderOpenIcon /> },
  { name: "Buscar", icon: <SwSearchIcon /> },
  { name: "Paleta", icon: <PaletteIcon /> },
  { name: "Apariencias", icon: <ShadowBallIcon /> },
  { name: "Propiedades", icon: <CardIcon /> },
];

const Big = ({ w, low, off, icon, label, menu }: { w: number; low?: boolean; off?: boolean; icon: React.ReactNode; label: string; menu?: boolean }) => (
  <BigButton $w={w} $low={low} $off={off}>
    {icon}
    <BigLabel>{label}</BigLabel>
    {menu && <Caret off={off} />}
  </BigButton>
);

const WindowButtons = () => (
  <>
    <button aria-label="Minimizar"><MinIcon /></button>
    <button aria-label="Restaurar"><RestoreIcon /></button>
    <button aria-label="Cerrar"><CloseIcon /></button>
  </>
);

export default function App() {
  return (
    <>
      <GlobalStyle />
      <Desktop>
        <Window>
          <TitleBar>
            <Brand>
              <Logo />
              <BrandName><b>Solid</b>Works</BrandName>
            </Brand>
            <BrandMore aria-label="Mostrar menú">
              <svg width="8" height="12" viewBox="0 0 8 12"><path d="M1 0l6 6-6 6z" fill="#2b2b58" /></svg>
            </BrandMore>
            <QuickBar>
              {quickTools.map((t) => (
                <QuickItem key={t.name} aria-label={t.name}>{t.icon}<Caret /></QuickItem>
              ))}
              <SelectTool aria-label="Seleccionar"><CursorIcon /><Caret /></SelectTool>
              <QuickLight aria-label="Reconstruir"><LightIcon /></QuickLight>
              <QuickItem aria-label="Opciones"><OptionsIcon /><Caret /></QuickItem>
              <QuickItem aria-label="Rehacer"><RedoIcon /><Caret off /></QuickItem>
            </QuickBar>
            <DocTitle>Pieza6 *</DocTitle>
            <Search>
              <SearchLens><LensIcon /></SearchLens>
              <Caret />
              <SearchInput aria-label="Búsqueda" defaultValue="Búsqueda de SolidWorks" />
            </Search>
            <AppControls $gap={15}>
              <button aria-label="Ayuda"><HelpIcon /></button>
              <Caret w={10} />
              <WindowButtons />
            </AppControls>
          </TitleBar>

          <Ribbon>
            <Big w={101} icon={<CroquisIcon />} label="Croquis" menu />
            <Big w={102} icon={<CotaIcon />} label={"Cota\ninteligente"} menu />
            <Separator />
            <ToolGrid>
              {sketchTools.map((t) => (
                <SmallTool key={t.name} aria-label={t.name}>{t.icon}{t.menu && <Caret off={t.off} />}</SmallTool>
              ))}
            </ToolGrid>
            <Separator />
            <Big w={108} off icon={<TrimIcon />} label={"Recortar\nentidades"} menu />
            <Big w={108} icon={<ConvertIcon />} label={"Convertir\nentidades"} menu />
            <Big w={150} low off icon={<OffsetIcon />} label={"Equidistanciar\nentidades"} />
            <RowList>
              {rowTools.map((t) => (
                <RowButton key={t.name}>{t.icon}<span>{t.name}</span>{t.menu && <Caret off />}</RowButton>
              ))}
            </RowList>
            <Separator />
            <Big w={180} off icon={<RelationsIcon />} label={"Visualizar/Eliminar\nrelaciones"} menu />
            <Big w={92} low off icon={<RepairIcon />} label={"Reparar\ncroquis"} />
            <Separator />
            <Big w={98} off icon={<SnapsIcon />} label={"Capturas\nrápidas"} menu />
            <Separator />
            <Big w={88} low icon={<RapidIcon />} label={"Croquis\nrápido"} />
            <Watermark>
              <svg width="112" height="115" viewBox="0 0 112 115" fill="#dddee9" aria-hidden="true">
                <path d="M34 6c30-6 48 0 44 16-4 14-20 24-36 28l-1-3c12-7 24-16 26-26 2-8-12-10-33-12z" />
                <path d="M8 62c28-9 52-6 48 12-4 18-28 34-54 40l14-40 9-2-10 30c16-6 28-16 30-28 2-8-12-12-37-9z" />
                <path d="M108 42c-26-2-34 2-33 8 1 8 22 20 18 32-3 12-20 16-42 16l2-7c16 1 28-1 29-7 2-8-20-19-19-32 2-14 22-17 45-13z" />
              </svg>
            </Watermark>
          </Ribbon>

          <TabStrip>
            {commandTabs.map((t) => (
              <CommandTab key={t} $active={t === "Croquis"}>{t}</CommandTab>
            ))}
          </TabStrip>

          <Body>
            <Panel>
              <PanelTabs>
                <PanelTab $active aria-label="Gestor de diseño"><PartIcon /></PanelTab>
                <PanelTab aria-label="Propiedades"><PropertyIcon /></PanelTab>
                <PanelTab aria-label="Configuraciones"><ConfigIcon /></PanelTab>
                <PanelTab aria-label="Cotas"><TargetIcon /></PanelTab>
                <PanelMore aria-label="Más">
                  <svg width="16" height="16" viewBox="0 0 16 16" fill="none" stroke="#55576a" strokeWidth="2"><path d="M1 2l6 6-6 6M8 2l6 6-6 6" /></svg>
                </PanelMore>
              </PanelTabs>
              <Filter>
                <FunnelIcon />
                <FilterInput aria-label="Filtro" />
              </Filter>
              <Tree>
                <TreeRoot><PartIcon /><span>{"Pieza6  (Predeterminado"}</span></TreeRoot>
                {treeItems.map((t, i) => (
                  <TreeItem key={t.name} $last={i === treeItems.length - 1}>
                    <Gutter>
                      {t.open && (
                        <Expander aria-label={`Expandir ${t.name}`}>
                          <svg width="11" height="11" viewBox="0 0 11 11" stroke="#222" strokeWidth="1.500"><path d="M0 5.500h11M5.500 0v11" /></svg>
                        </Expander>
                      )}
                    </Gutter>
                    {t.icon}
                    <span>{t.name}</span>
                  </TreeItem>
                ))}
              </Tree>
              <HScroll>
                <svg width="9" height="14" viewBox="0 0 9 14"><path d="M9 0v14L1 7z" fill="#33343c" /></svg>
                <Thumb aria-label="Desplazar"><i /><i /><i /></Thumb>
                <svg width="9" height="14" viewBox="0 0 9 14"><path d="M0 0v14l8-7z" fill="#44454c" /></svg>
              </HScroll>
              <Splitter aria-label="Contraer panel">
                <svg width="6" height="34" viewBox="0 0 6 34" fill="#55576a"><path d="M6 0v8L1 4zM6 13v8l-5-4zM6 26v8l-5-4z" /></svg>
              </Splitter>
            </Panel>

            <Canvas>
              <Model />
              <ViewBar>
                {viewTools.map((t) => (
                  <ViewTool key={t.name} aria-label={t.name}>{t.icon}{t.menu && <Caret />}</ViewTool>
                ))}
              </ViewBar>
              <DocControls $gap={14}><WindowButtons /></DocControls>
              <TaskPane>
                {taskTabs.map((t, i) => (
                  <TaskTab key={t.name} $active={i === 0} aria-label={t.name}>{t.icon}</TaskTab>
                ))}
              </TaskPane>
            </Canvas>
          </Body>

          <ModelTabs>
            <NavGroup>
              {["M9 1v12M20 1v12l-8-6z", "M17 1v12L9 7z", "M8 1v12l8-6z", "M16 1v12M5 1v12l8-6z"].map((d) => (
                <NavButton key={d} aria-label="Desplazar pestañas">
                  <svg width="25" height="14" viewBox="0 0 25 14" fill="#8486a0" stroke="#8486a0"><path d={d} /></svg>
                </NavButton>
              ))}
            </NavGroup>
            <ModelTab $active $w={117}>Modelo</ModelTab>
            <ModelTab $w={308}>Estudio de movimiento 1</ModelTab>
          </ModelTabs>
          <StatusBar>
            <span>Edición de estudiante de SolidWorks - Sólo para uso académico</span>
            <StatusMode>Editando Pieza</StatusMode>
            <StatusHelp aria-label="Ayuda rápida">
              <svg width="22" height="22" viewBox="0 0 22 22" fill="none"><path d="M1 1h20v20H1z" fill="#f2fbf4" stroke="#2b4a5e" strokeWidth="2" /><path d="M7 8c0-4 8-4 8 0 0 3-4 2-4 6" stroke="#14933a" strokeWidth="3" /><path d="M9 16h4v3H9z" fill="#14933a" /></svg>
            </StatusHelp>
            <StatusTag aria-label="Etiquetas"><TagIcon /></StatusTag>
          </StatusBar>
        </Window>
      </Desktop>
    </>
  );
}
